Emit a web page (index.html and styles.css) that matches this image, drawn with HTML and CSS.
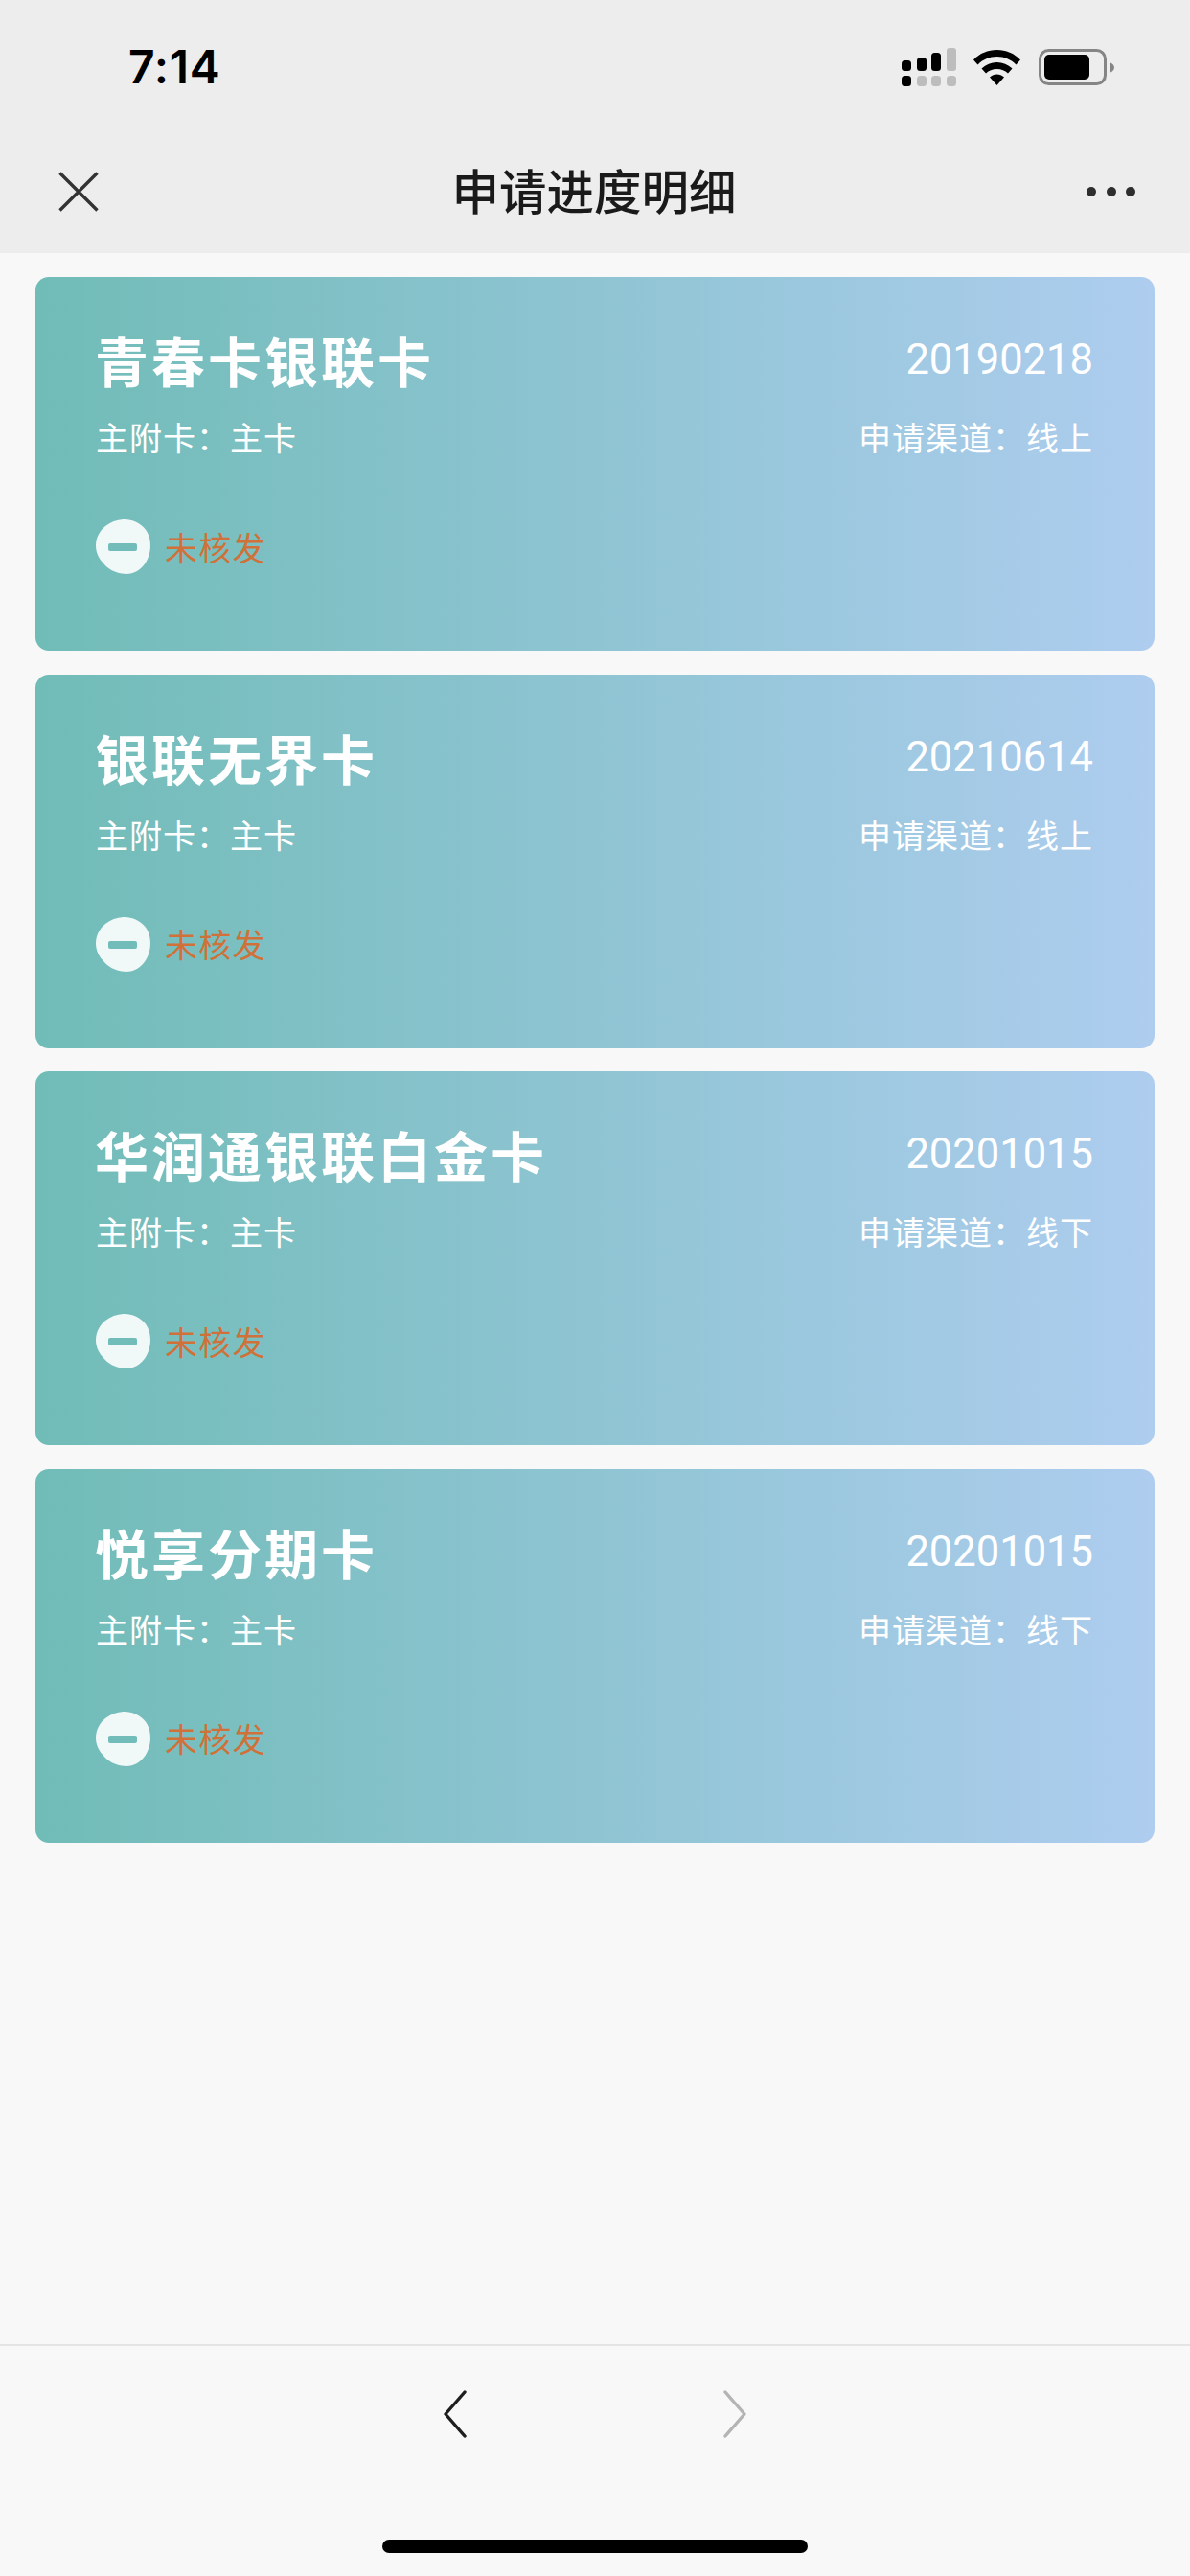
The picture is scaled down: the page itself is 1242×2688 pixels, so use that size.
FILE: index.html
```html
<!DOCTYPE html>
<html lang="zh-CN">
<head>
<meta charset="utf-8">
<title>申请进度明细</title>
<link rel="stylesheet" href="styles.css">
</head>
<body>
<svg class="defs" width="0" height="0">
  <symbol id="minus" viewBox="0 0 57 57">
    <path fill="#f0f8f8" d="M31 0C41 0.500 50 6 54 14C57 20 57.500 27 56.500 33C55 42 50 50 43 54C38 57 32 57.500 27 56.500C20 55.500 13 52 8.500 46.500C3 41 0 34 0 27.500C0 19 4 12 10 7C16 2.500 23 -0.300 31 0Z"/>
    <rect x="13" y="25" width="30" height="8" rx="2" fill="#72bdb9"/>
  </symbol>
</svg>
<div class="app">
  <header class="top">
    <div class="status">
      <span class="time">7:14</span>
      <div class="status-icons">
        <svg class="signal" width="57" height="41" viewBox="0 0 57 41">
          <g fill="#000">
            <rect x="0" y="13" width="10" height="11" rx="3.500"/>
            <rect x="16" y="10" width="10" height="14" rx="3.500"/>
            <rect x="31" y="5" width="10" height="19" rx="3.500"/>
            <rect x="0" y="29" width="10" height="11" rx="3.500"/>
          </g>
          <g fill="#bdbdbd">
            <rect x="47" y="0" width="10" height="24" rx="3"/>
            <rect x="16" y="29" width="10" height="11" rx="3.500"/>
            <rect x="31" y="29" width="10" height="11" rx="3.500"/>
            <rect x="47" y="29" width="10" height="11" rx="3.500"/>
          </g>
        </svg>
        <svg class="wifi" width="49" height="37" viewBox="0 0 49 37">
          <path fill="#000" d="M24.500 0C15 0 6.500 3.500 0 10.500L4.500 15.500C9.800 10 16.800 7 24.500 7S39.200 10 44.500 15.500L49 10.500C42.500 3.500 34 0 24.500 0Z"/>
          <path fill="#000" d="M24.500 13C18.500 13 13 15.200 8.500 19.500L13 24.500C16 21.500 20 20 24.500 20S33 21.500 36 24.500L40.500 19.500C36 15.200 30.500 13 24.500 13Z"/>
          <path fill="#000" d="M24.500 25.500C21.800 25.500 19.200 26.500 17 28.500L24.500 37L32 28.500C29.800 26.500 27.200 25.500 24.500 25.500Z"/>
        </svg>
        <svg class="battery" width="79" height="38" viewBox="0 0 79 38">
          <rect x="1.500" y="1.500" width="68" height="35" rx="9" fill="none" stroke="#858585" stroke-width="3"/>
          <rect x="6" y="6" width="47" height="26" rx="5" fill="#000"/>
          <path fill="#858585" d="M74 14C77 15 79 17 79 19.500S77 24 74 25Z"/>
        </svg>
      </div>
    </div>
    <nav class="nav">
      <svg class="close" width="42" height="42" viewBox="0 0 42 42">
        <path d="M1.500 1.500L40.500 40.500M40.500 1.500L1.500 40.500" stroke="#333" stroke-width="3.400" fill="none"/>
      </svg>
      <h1 class="title">申请进度明细</h1>
      <svg class="more" width="52" height="10" viewBox="0 0 52 10">
        <circle cx="5" cy="5" r="5" fill="#2e2e2e"/>
        <circle cx="26" cy="5" r="5" fill="#2e2e2e"/>
        <circle cx="46" cy="5" r="5" fill="#2e2e2e"/>
      </svg>
    </nav>
  </header>

  <main class="list">
    <article class="card">
      <div class="row">
        <h2 class="name">青春卡银联卡</h2>
        <span class="date">20190218</span>
      </div>
      <div class="row sub">
        <span class="meta">主附卡：主卡</span>
        <span class="meta">申请渠道：线上</span>
      </div>
      <div class="state">
        <svg class="state-icon" width="57" height="57"><use href="#minus"/></svg>
        <span class="state-text">未核发</span>
      </div>
    </article>

    <article class="card">
      <div class="row">
        <h2 class="name">银联无界卡</h2>
        <span class="date">20210614</span>
      </div>
      <div class="row sub">
        <span class="meta">主附卡：主卡</span>
        <span class="meta">申请渠道：线上</span>
      </div>
      <div class="state">
        <svg class="state-icon" width="57" height="57"><use href="#minus"/></svg>
        <span class="state-text">未核发</span>
      </div>
    </article>

    <article class="card">
      <div class="row">
        <h2 class="name">华润通银联白金卡</h2>
        <span class="date">20201015</span>
      </div>
      <div class="row sub">
        <span class="meta">主附卡：主卡</span>
        <span class="meta">申请渠道：线下</span>
      </div>
      <div class="state">
        <svg class="state-icon" width="57" height="57"><use href="#minus"/></svg>
        <span class="state-text">未核发</span>
      </div>
    </article>

    <article class="card">
      <div class="row">
        <h2 class="name">悦享分期卡</h2>
        <span class="date">20201015</span>
      </div>
      <div class="row sub">
        <span class="meta">主附卡：主卡</span>
        <span class="meta">申请渠道：线下</span>
      </div>
      <div class="state">
        <svg class="state-icon" width="57" height="57"><use href="#minus"/></svg>
        <span class="state-text">未核发</span>
      </div>
    </article>
  </main>

  <footer class="bottom">
    <div class="arrows">
      <svg width="24" height="50" viewBox="0 0 24 50">
        <path d="M22 2L2 25L22 48" fill="none" stroke="#1f1f1f" stroke-width="3.400" stroke-linecap="round" stroke-linejoin="round"/>
      </svg>
      <svg width="24" height="50" viewBox="0 0 24 50">
        <path d="M2 2L22 25L2 48" fill="none" stroke="#b4b4b4" stroke-width="3.400" stroke-linecap="round" stroke-linejoin="round"/>
      </svg>
    </div>
    <div class="home-bar"></div>
  </footer>
</div>
</body>
</html>
```

FILE: styles.css
```css
* {
  box-sizing: border-box;
  margin: 0;
  padding: 0;
}

html,
body {
  width: 1242px;
  height: 2688px;
  overflow: hidden;
  background: #f8f8f8;
  font-family: "Noto Sans CJK SC", "Liberation Sans", sans-serif;
}

svg {
  display: block;
  flex: none;
}

.defs {
  position: absolute;
}

.app {
  display: flex;
  flex-direction: column;
  width: 1242px;
  height: 2688px;
}

.top {
  flex: none;
  height: 264px;
  background: #ededed;
}

.status {
  display: flex;
  justify-content: space-between;
  align-items: flex-start;
  height: 149px;
  padding: 50px 79px 0 134px;
}

.time {
  font-family: Inter, "Liberation Sans", sans-serif;
  font-size: 48px;
  font-weight: 600;
  line-height: 40px;
  letter-spacing: 0.700px;
  color: #000;
}

.status-icons {
  display: flex;
  align-items: flex-start;
}

.signal {
  margin-right: 18px;
}

.wifi {
  margin: 2px 19px 0 0;
}

.battery {
  margin-top: 1px;
}

.nav {
  display: grid;
  grid-template-columns: 1fr auto 1fr;
  align-items: center;
  height: 102px;
  padding: 0 63px 0 61px;
}

.more {
  justify-self: end;
  margin-right: -7px;
}

.title {
  padding-bottom: 4px;
  font-size: 49.500px;
  font-weight: 500;
  line-height: 60px;
  color: #1a1a1a;
}

.list {
  flex: 1;
  display: flex;
  flex-direction: column;
  gap: 24.670px;
  padding: 25px 37px 0;
}

.card {
  padding: 56px 64px 80px 63px;
  border-radius: 14px;
  background: linear-gradient(90deg, #70bcb7 0%, #aecdef 100%);
}

.row {
  display: flex;
  justify-content: space-between;
  align-items: center;
}

.sub {
  margin-top: 29px;
}

.name {
  margin-left: -1px;
  font-size: 56px;
  font-weight: 700;
  line-height: 60px;
  letter-spacing: 3px;
  color: #fff;
}

.date {
  margin-top: 2px;
  font-family: Roboto, "Liberation Sans", sans-serif;
  font-size: 43.500px;
  font-weight: 400;
  line-height: 50px;
  color: #fff;
}

.meta {
  font-size: 34px;
  font-weight: 400;
  line-height: 44px;
  letter-spacing: 1px;
  color: #fff;
}

.state {
  display: flex;
  align-items: center;
  gap: 15px;
  margin-top: 64px;
}

.state-text {
  font-size: 34px;
  line-height: 44px;
  letter-spacing: 1.300px;
  color: #cf7139;
}

.bottom {
  flex: none;
  display: flex;
  flex-direction: column;
  align-items: center;
  height: 242px;
  border-top: 2px solid #e4e4e4;
}

.arrows {
  display: flex;
  justify-content: center;
  gap: 268px;
  margin-top: 46px;
}

.home-bar {
  width: 444px;
  height: 14px;
  margin-top: 106px;
  border-radius: 7px;
  background: #000;
}
```
